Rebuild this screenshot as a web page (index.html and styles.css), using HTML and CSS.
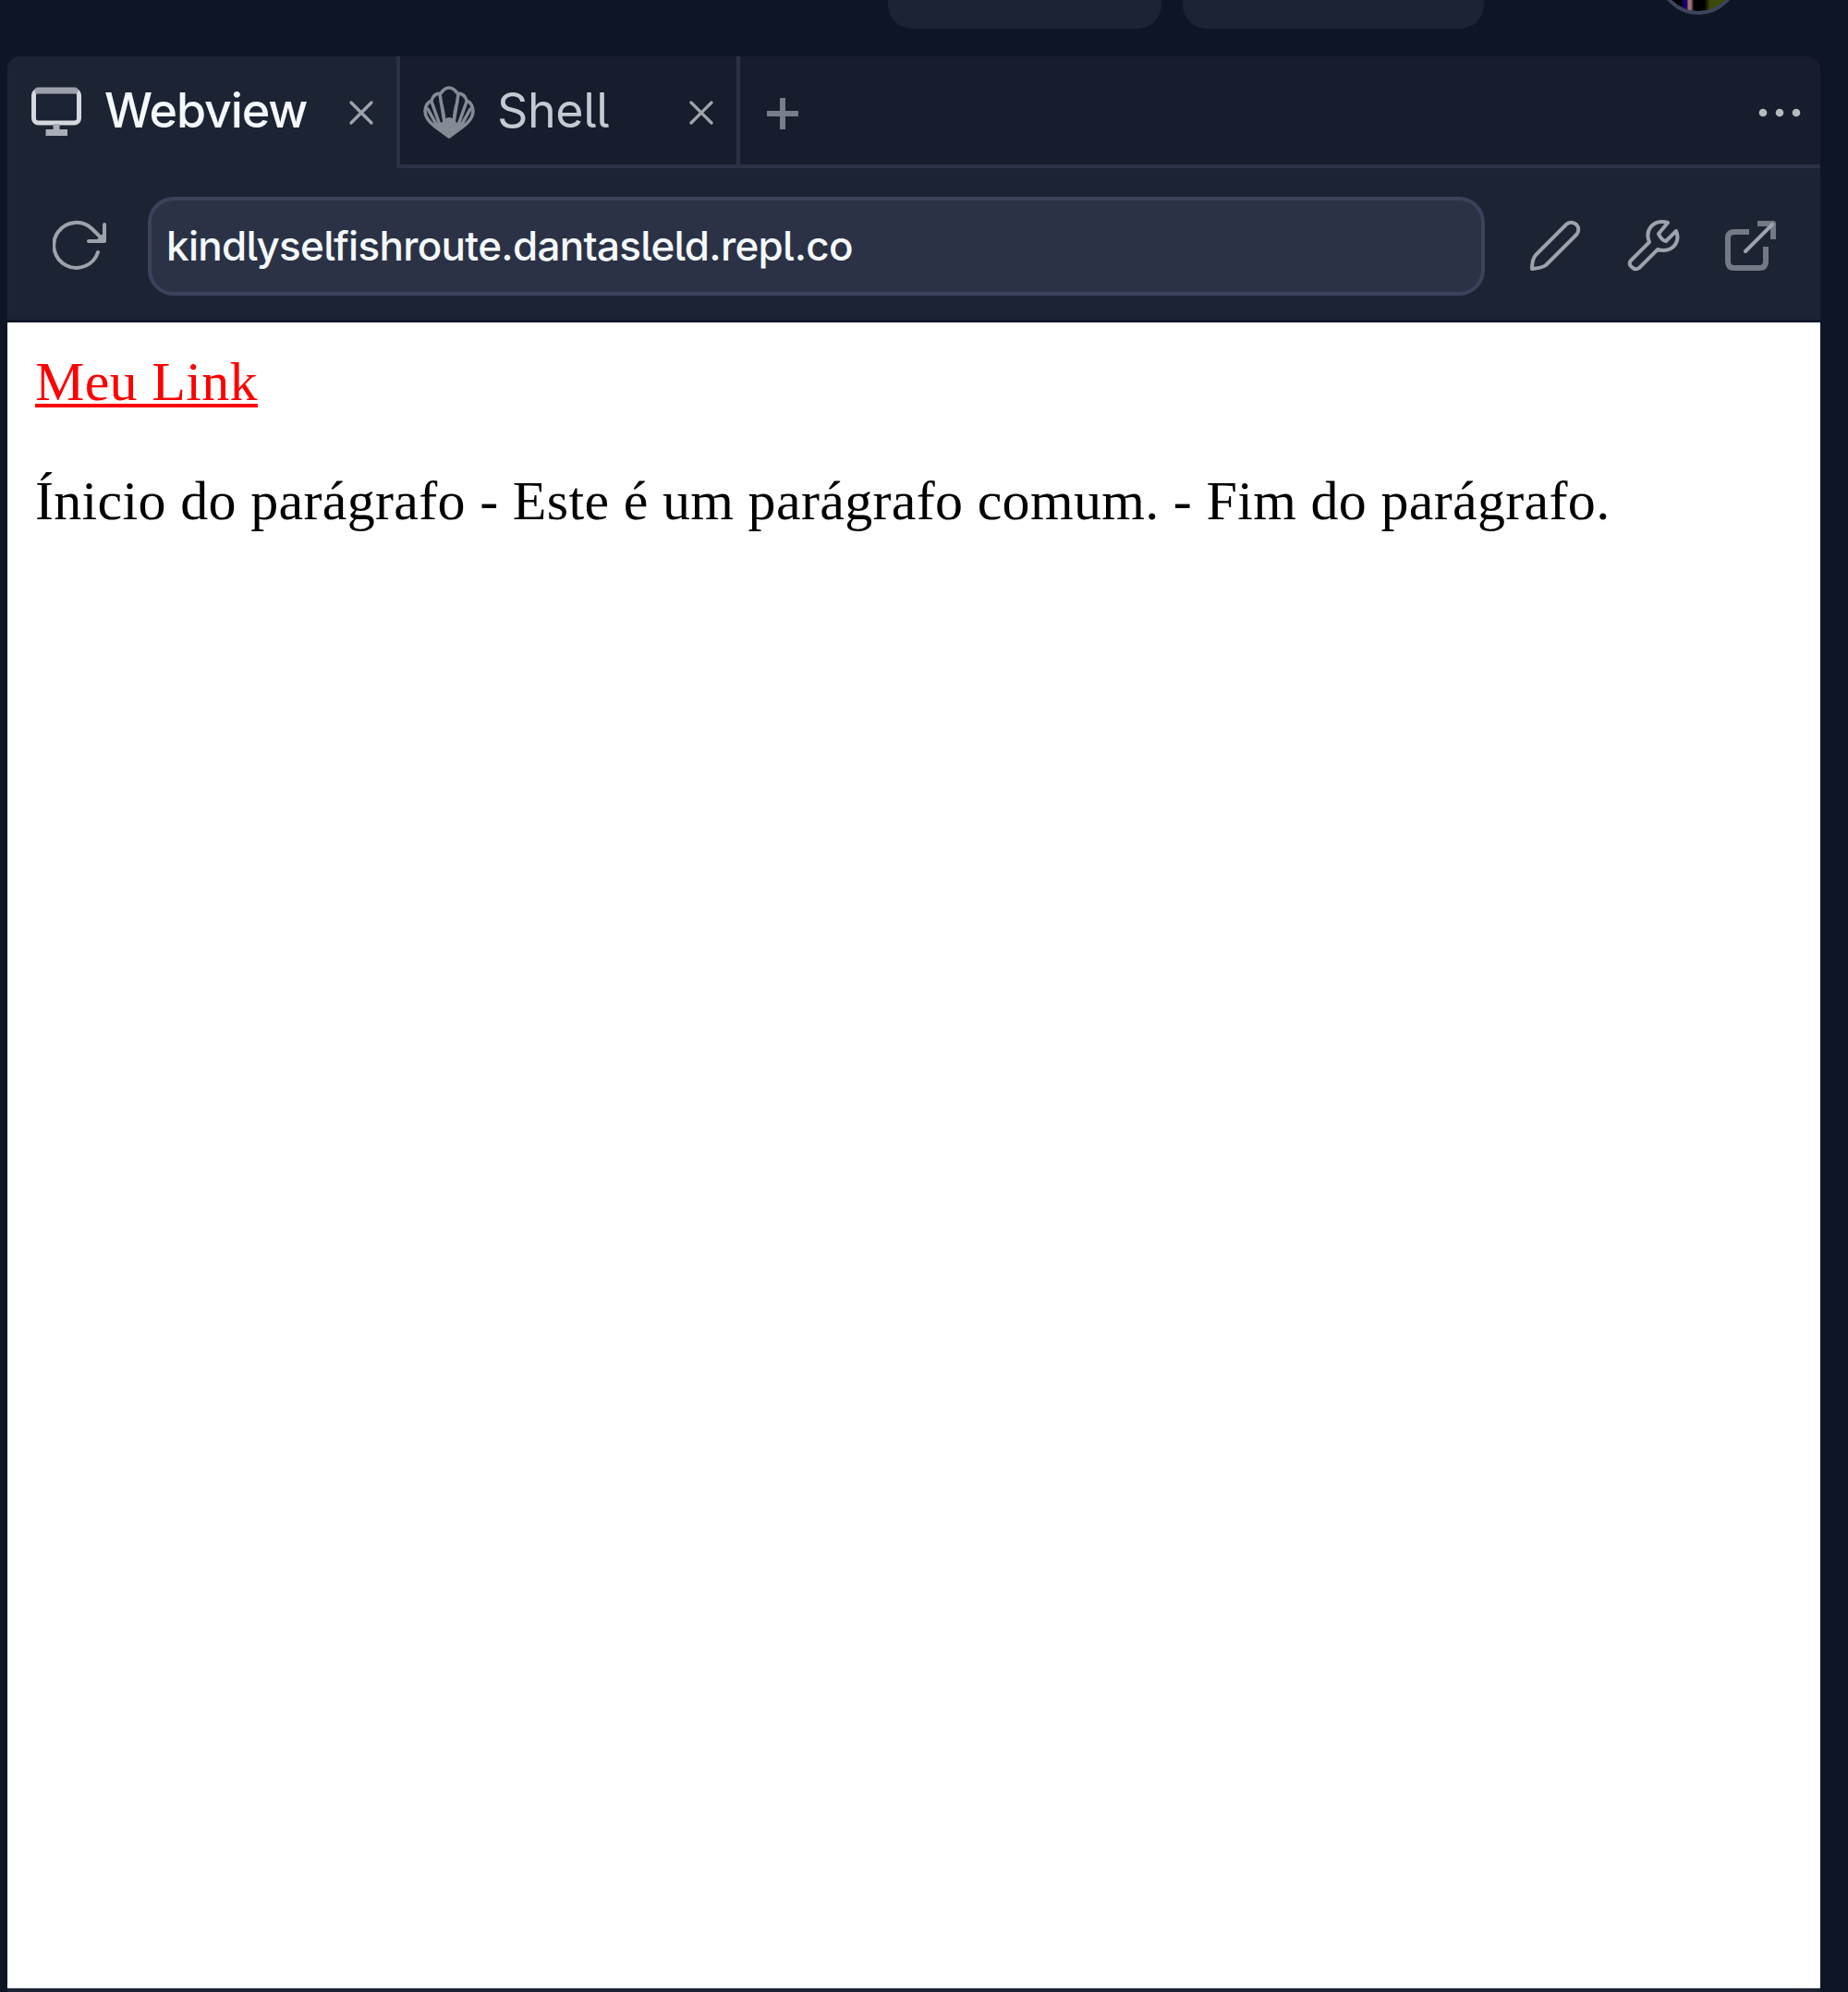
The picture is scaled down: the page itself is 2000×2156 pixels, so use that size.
FILE: index.html
```
<!DOCTYPE html>
<html lang="pt-BR">
<head>
<meta charset="utf-8">
<title>Webview</title>
<link rel="stylesheet" href="styles.css">
</head>
<body>
<header class="topbar">
  <div class="pill pill-a"></div>
  <div class="pill pill-b"></div>
  <div class="avatar"></div>
</header>
<main class="panel">
  <nav class="tabs">
    <div class="tab active">
      <svg class="icon monitor" viewBox="0 0 60 60"><rect x="5.500" y="7" width="49" height="35" rx="5"/><path d="M10 7h40" class="soft"/><path d="M30 43v8M18.500 52.500h23.500" class="stand"/></svg>
      <span class="label">Webview</span>
      <svg class="close" viewBox="0 0 32 32"><path d="M5 5l22 22M27 5L5 27"/></svg>
    </div>
    <div class="tab shell">
      <svg class="icon scallop" viewBox="0 0 60 60"><path d="M30 57L15 46Q4 38 4 29Q5 20 11 18Q13 10 21 10Q25 4 30 4Q35 4 39 10Q47 10 49 18Q55 20 56 29Q56 38 45 46Z"/><path d="M25 42L20 11M35 42L40 11M20 44L11 19M40 44L49 19M25 42Q24 28 21 19M35 42Q36 28 39 19M17 45L7 27M43 45L53 27"/><path class="fan" d="M30 57L14 45Q21 44 25 38Q30 34 35 38Q39 44 46 45Z"/></svg>
      <span class="label">Shell</span>
      <svg class="close" viewBox="0 0 32 32"><path d="M5 5l22 22M27 5L5 27"/></svg>
    </div>
    <svg class="plus" viewBox="0 0 36 36"><path d="M18 1v34M1 18h34"/></svg>
    <svg class="more" viewBox="0 0 48 12"><circle cx="6" cy="6" r="4.300"/><circle cx="24" cy="6" r="4.300"/><circle cx="42" cy="6" r="4.300"/></svg>
  </nav>
  <div class="toolbar">
    <svg class="icon refresh" viewBox="0 0 60 60"><path d="M49 37A24.500 24.500 0 1 1 43 12L54 23M56 7V25H39M49 25L56 18"/></svg>
    <div class="address">kindlyselfishroute.dantasleld.repl.co</div>
    <svg class="icon pencil" viewBox="0 0 60 60"><path d="M42 7a7.500 7.500 0 0 1 11 11L20 51Q16 54 5 55Q5 45 9 40Z"/></svg>
    <svg class="icon wrench" viewBox="0 0 60 60"><path d="M45 5Q34 2 27 9Q21 16 25 26L5 46Q2 50 6 53Q10 57 14 54L34 34Q44 37 51 31Q58 24 54 14L43 25Q38 24 35 17Z"/></svg>
    <svg class="icon external" viewBox="0 0 60 60"><path class="frame" d="M28 15H12Q5 15 5 22V47Q5 54 12 54H39Q46 54 46 47V31M37 6H54V23"/><path d="M53 7L24 36"/></svg>
  </div>
  <section class="page">
    <a class="link">Meu Link</a>
    <p class="paragraph">Ínicio do parágrafo - Este é um parágrafo comum. - Fim do parágrafo.</p>
  </section>
</main>
</body>
</html>
```
FILE: styles.css
```
* { box-sizing: border-box; }
body {
  margin: 0;
  width: 2000px;
  height: 2156px;
  overflow: hidden;
  background: #0e1525;
  font-family: Inter, "Liberation Sans", sans-serif;
}
svg { display: block; flex: none; fill: none; stroke-linecap: round; stroke-linejoin: round; }
.topbar { display: flex; align-items: flex-end; height: 61px; padding: 0 0 30px 961px; }
.pill { height: 31px; background: #1c2333; border-radius: 0 0 26px 26px; }
.pill-a { width: 296px; margin-right: 23px; }
.pill-b { width: 326px; margin-right: 188px; }
.avatar {
  flex: none;
  width: 88px;
  height: 88px;
  margin-bottom: 15px;
  border: 4px solid #3c445c;
  border-radius: 50%;
  background: linear-gradient(90deg, #000 28%, #15006b 29% 35%, #a07075 36% 40%, #000 44% 58%, #3c4a05 66%);
}
.panel { width: 1962px; height: 2095px; margin-left: 8px; background: #1c2333; border-radius: 14px 14px 0 0; overflow: hidden; }
.tabs { display: flex; align-items: center; height: 121px; background: #171d2d; box-shadow: inset 0 -4px #2b3245; }
.tab { display: flex; align-items: center; height: 121px; padding-left: 23px; border-right: 4px solid #2b3245; }
.active { width: 425px; padding-bottom: 4px; background: #1c2333; }
.shell { width: 368px; border-bottom: 4px solid #2b3245; }
.icon { width: 60px; height: 60px; stroke: #9da2ab; stroke-width: 4; }
.tab .icon { margin-top: 3px; }
.monitor { stroke: #d5d8dd; stroke-width: 5; }
.monitor .soft { stroke: #9ba0aa; stroke-width: 7; }
.monitor .stand { stroke: #a9adb6; stroke-width: 7; stroke-linecap: butt; }
.scallop { stroke: #858b95; stroke-width: 3.5; }
.fan { fill: #858b95; stroke: none; }
.label {
  flex: none;
  width: 262px;
  margin-left: 22px;
  color: #f5f9fc;
  font-size: 52px;
  line-height: 70px;
  font-weight: 500;
  letter-spacing: -1.1px;
  font-feature-settings: "cv05";
  white-space: nowrap;
}
.shell .label { width: 205px; color: #c5cad2; font-weight: 400; letter-spacing: -0.4px; }
.close { width: 32px; height: 32px; margin-top: 5px; stroke: #a0a4aa; stroke-width: 3.3; }
.plus { width: 36px; height: 36px; margin: 2px 0 0 28px; stroke: #777e8b; stroke-width: 6; stroke-linecap: butt; }
.more { width: 48px; height: 12px; margin: 1px 20px 0 auto; fill: #b7bbc0; }
.toolbar { display: flex; align-items: center; height: 167px; padding: 4px 44px 0 49px; border-bottom: 3px solid #101729; }
.address {
  width: 1447px;
  height: 107px;
  margin: 0 46px 0 43px;
  padding-left: 16px;
  background: #2b3245;
  border: 4px solid #3a435b;
  border-radius: 28px;
  color: #f5f9fc;
  font-size: 44px;
  line-height: 98px;
  font-weight: 500;
  letter-spacing: -0.7px;
  font-feature-settings: "cv05";
  white-space: nowrap;
}
.wrench { margin-left: 47px; }
.external { margin-left: 45px; }
.external .frame { stroke: #737985; stroke-width: 6; stroke-linecap: butt; }
.page {
  height: 1803px;
  padding: 30px;
  background: #fff;
  color: #000;
  font: 60px/68px "Liberation Serif", serif;
  letter-spacing: 0.32px;
}
.link {
  display: block;
  width: max-content;
  color: #f00;
  text-decoration: underline;
  text-decoration-thickness: 4px;
  text-underline-offset: 4px;
}
.paragraph { margin: 61px 0 0; white-space: nowrap; }
```
